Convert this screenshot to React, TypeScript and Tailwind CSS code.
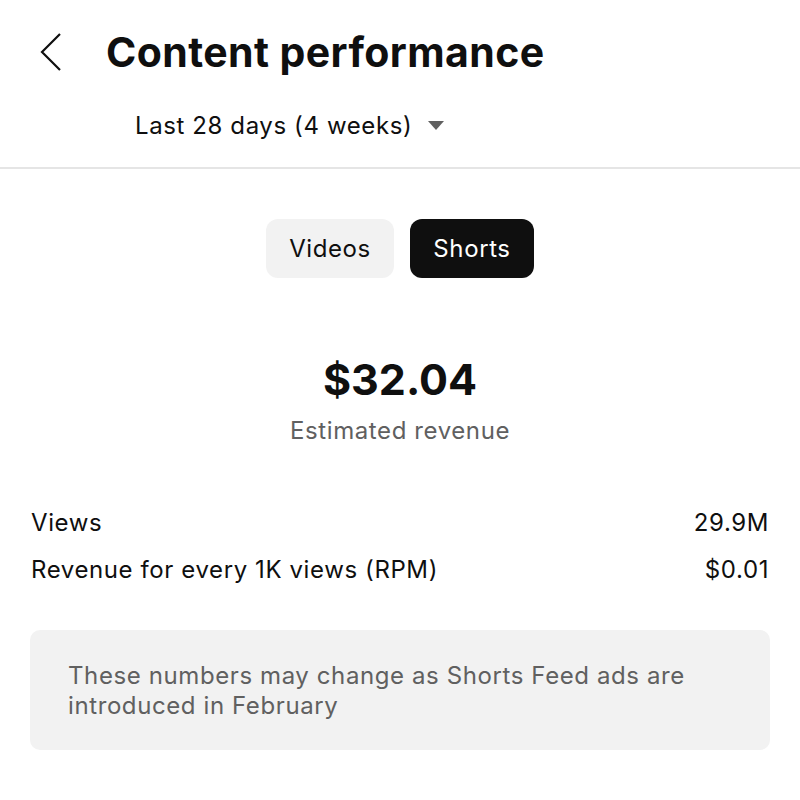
export default function App() {
  return (
    <div className="w-[800px] h-[800px] bg-white text-[#0f0f0f] font-['Inter','Liberation_Sans',sans-serif]">
      <div className="flex items-center h-[104px] pl-[38px]">
        <svg width="26" height="40" viewBox="0 0 26 40" className="shrink-0">
          <path d="M22 2 L4 20 L22 38" fill="none" stroke="#0f0f0f" strokeWidth="2.2" strokeLinejoin="miter" />
        </svg>
        <h1 className="ml-[42px] text-[41px] font-bold tracking-[0.4px] leading-none">Content performance</h1>
      </div>
      <div className="flex items-center pl-[135px] h-[44px]">
        <span className="text-[24px] tracking-[0.6px]">Last 28 days (4 weeks)</span>
        <svg width="16" height="10" viewBox="0 0 16 10" className="ml-[16px]">
          <path d="M0 0 L16 0 L8 9 Z" fill="#606060" />
        </svg>
      </div>
      <div className="mt-[19px] h-[2px] bg-[#e5e5e5]" />
      <div className="flex justify-center gap-[16px] mt-[50px]">
        <button className="w-[128px] h-[59px] rounded-[12px] bg-[#f2f2f2] text-[24px] tracking-[0.6px]">Videos</button>
        <button className="w-[124px] h-[59px] rounded-[12px] bg-[#0f0f0f] text-white text-[24px] tracking-[0.6px]">Shorts</button>
      </div>
      <div className="flex flex-col items-center mt-[80px]">
        <div className="text-[43px] font-bold leading-none">$32.04</div>
        <div className="mt-[18px] text-[24px] tracking-[0.6px] text-[#606060] leading-none">Estimated revenue</div>
      </div>
      <div className="px-[31px] mt-[66px] flex flex-col gap-[20px] text-[24px] tracking-[0.6px] leading-[27px]">
        <div className="flex justify-between">
          <span>Views</span>
          <span>29.9M</span>
        </div>
        <div className="flex justify-between">
          <span>Revenue for every 1K views (RPM)</span>
          <span>$0.01</span>
        </div>
      </div>
      <div className="mx-[30px] mt-[47px] h-[120px] rounded-[10px] bg-[#f2f2f2] px-[38px] pt-[31px] text-[24px] tracking-[0.6px] leading-[30px] text-[#606060]">
        These numbers may change as Shorts Feed ads are introduced in February
      </div>
    </div>
  );
}
